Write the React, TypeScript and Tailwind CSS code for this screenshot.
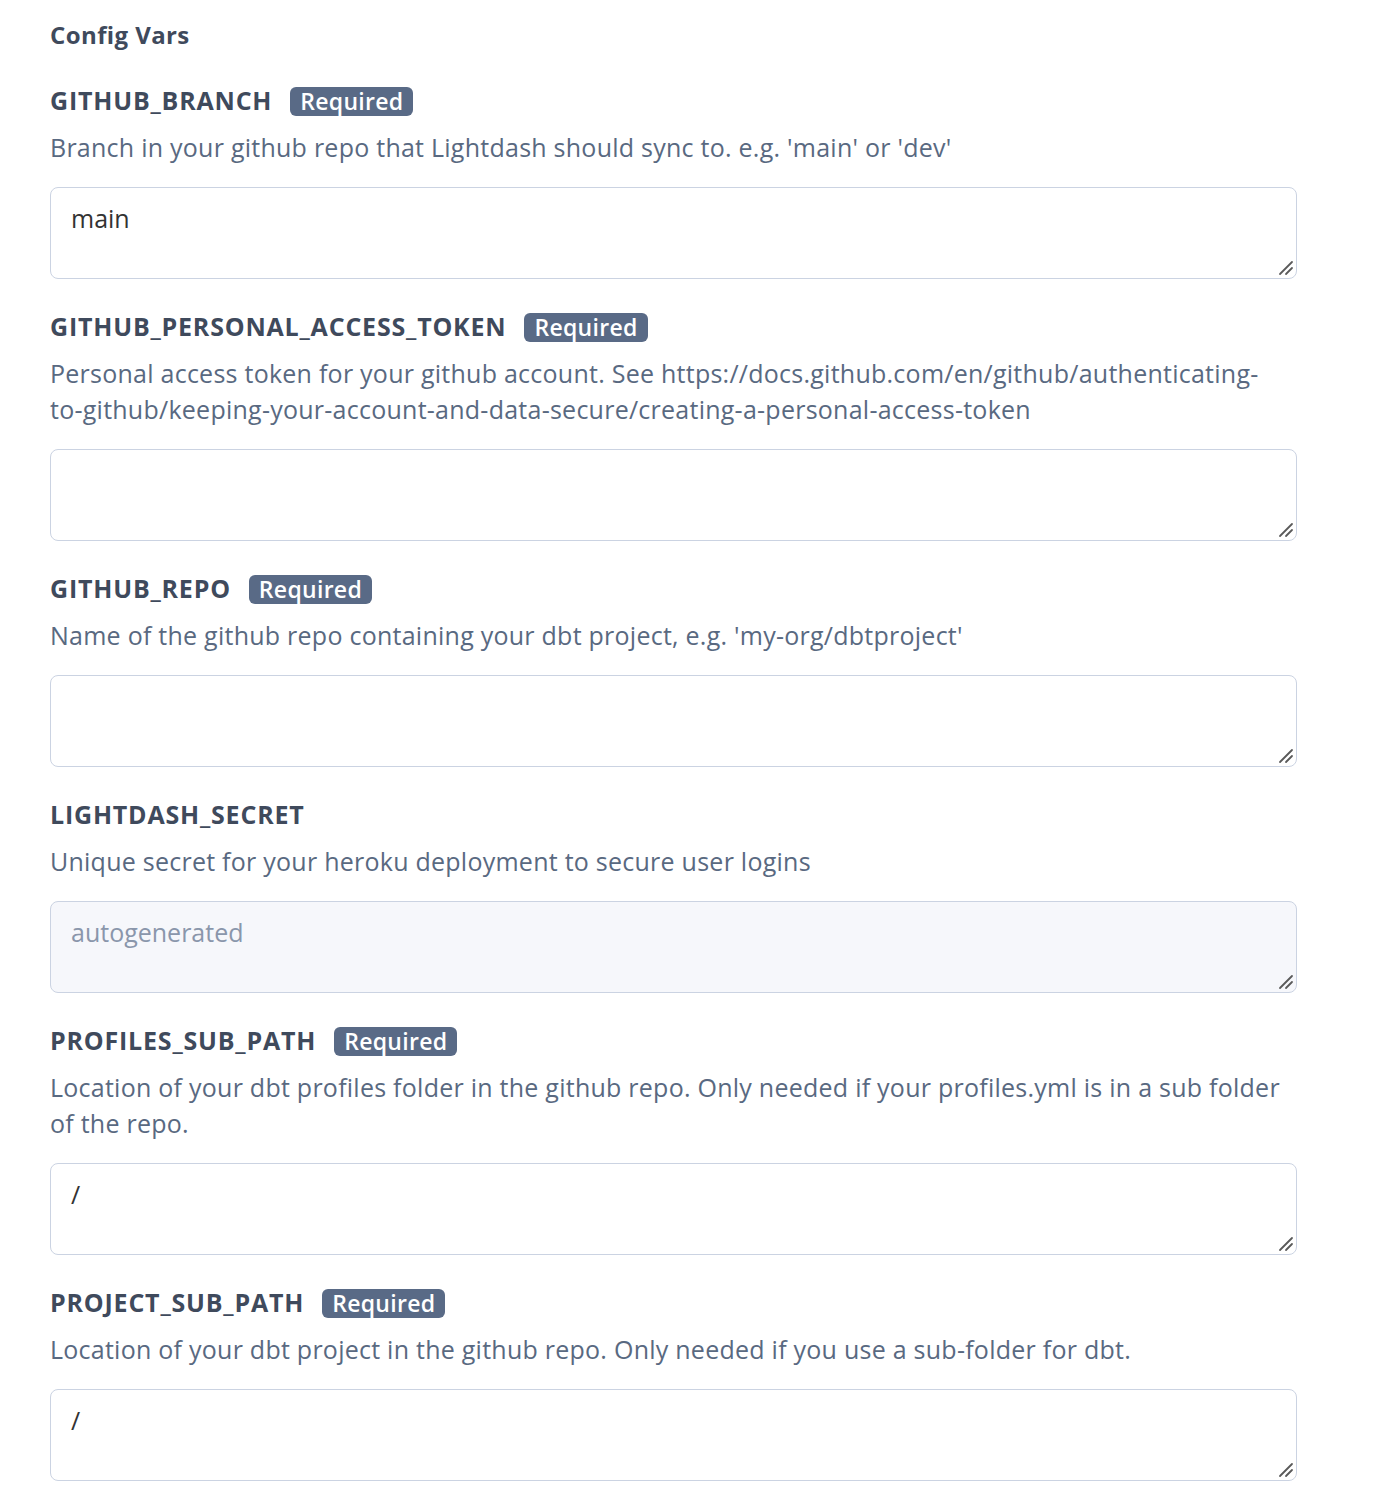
const fields: {
  name: string;
  required: boolean;
  description: string[];
  value: string;
  disabled?: boolean;
}[] = [
  {
    name: 'GITHUB_BRANCH',
    required: true,
    description: ["Branch in your github repo that Lightdash should sync to. e.g. 'main' or 'dev'"],
    value: 'main',
  },
  {
    name: 'GITHUB_PERSONAL_ACCESS_TOKEN',
    required: true,
    description: [
      'Personal access token for your github account. See https://docs.github.com/en/github/authenticating-',
      'to-github/keeping-your-account-and-data-secure/creating-a-personal-access-token',
    ],
    value: '',
  },
  {
    name: 'GITHUB_REPO',
    required: true,
    description: ["Name of the github repo containing your dbt project, e.g. 'my-org/dbtproject'"],
    value: '',
  },
  {
    name: 'LIGHTDASH_SECRET',
    required: false,
    description: ['Unique secret for your heroku deployment to secure user logins'],
    value: '',
    disabled: true,
  },
  {
    name: 'PROFILES_SUB_PATH',
    required: true,
    description: [
      'Location of your dbt profiles folder in the github repo. Only needed if your profiles.yml is in a sub folder',
      'of the repo.',
    ],
    value: '/',
  },
  {
    name: 'PROJECT_SUB_PATH',
    required: true,
    description: ['Location of your dbt project in the github repo. Only needed if you use a sub-folder for dbt.'],
    value: '/',
  },
];

function ConfigField({ field }: { field: (typeof fields)[number] }) {
  return (
    <div className="mb-[30px]">
      <div className="flex items-center h-[36px]">
        <span className="text-[25px] font-bold tracking-[0.8px] text-[#3f4a5c]">{field.name}</span>
        {field.required && (
          <span className="ml-[18px] rounded-[6px] bg-[#596a86] px-[10px] h-[29px] flex items-center text-[23px] font-semibold tracking-[0.3px] text-white">
            Required
          </span>
        )}
      </div>
      <div className="mt-[10px] text-[25px] leading-[36px] tracking-[0.25px] text-[#596981] whitespace-nowrap">
        {field.description.map((line) => (
          <div key={line}>{line}</div>
        ))}
      </div>
      <div className="relative mt-[22px] w-[1247px]">
        <textarea
          defaultValue={field.value}
          placeholder={field.disabled ? 'autogenerated' : ''}
          disabled={field.disabled}
          className={`block w-full h-[92px] rounded-[8px] border border-[#cbd3e2] px-[20px] pt-[12px] text-[25px] leading-[36px] text-[#333] resize-none outline-none placeholder:text-[#8a96ab] ${
            field.disabled ? 'bg-[#f6f7fb]' : 'bg-white'
          }`}
        />
        <svg className="absolute right-[3px] bottom-[3px] pointer-events-none" width="16" height="16" viewBox="0 0 16 16">
          <line x1="2" y1="14" x2="14" y2="2" stroke="#5a5a5a" strokeWidth="1.8" strokeLinecap="round" />
          <line x1="8" y1="14" x2="14" y2="8" stroke="#5a5a5a" strokeWidth="1.8" strokeLinecap="round" />
        </svg>
      </div>
    </div>
  );
}

export default function App() {
  return (
    <div className="min-h-screen bg-white pl-[50px] pt-[17px]" style={{ fontFamily: '"Open Sans", "Noto Sans", sans-serif' }}>
      <h2 className="text-[24px] leading-[36px] font-bold tracking-[0.4px] text-[#3f4a5c] mb-[30px]">Config Vars</h2>
      {fields.map((field) => (
        <ConfigField key={field.name} field={field} />
      ))}
    </div>
  );
}
